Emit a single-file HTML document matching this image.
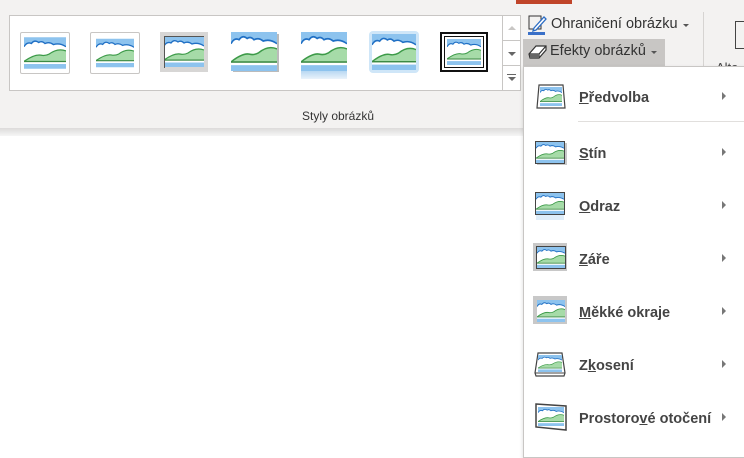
<!DOCTYPE html>
<html><head><meta charset="utf-8"><style>
body{margin:0;width:744px;height:441px;position:relative;overflow:hidden;background:#fff;font-family:"Liberation Sans","DejaVu Sans",sans-serif;}
.rib{position:absolute;left:0;top:0;width:744px;height:128px;background:#f3f2f1;}
.shadow{position:absolute;left:0;top:128px;width:744px;height:8px;background:linear-gradient(#dcdbda,#f6f6f6);}
.gal{position:absolute;left:9px;top:15px;width:492px;height:74px;background:#fff;border:1px solid #c8c6c4;}
.sb{position:absolute;left:502px;width:17px;background:#fff;border:1px solid #c8c6c4;}
.t{position:absolute;}
.mi{position:absolute;left:534px;height:30px;width:200px;}
.mi .lab{position:absolute;left:45px;top:8px;font-size:14.5px;font-weight:bold;color:#444;}
.mi .ar{position:absolute;left:188px;top:10px;width:0;height:0;border-left:4px solid #777;border-top:4px solid transparent;border-bottom:4px solid transparent;}
u{text-decoration:underline;}
</style></head><body>
<svg width="0" height="0" style="position:absolute"><defs>
<symbol id="p" viewBox="0 0 40 30">
<rect x="0" y="0" width="40" height="30" fill="#fff"/>
<rect x="0" y="0" width="40" height="9" fill="#8dc3ee"/>
<path d="M0 9 Q3 4 7 6 Q10 2 14 5 Q17 3 20 6 Q24 4 28 7 Q34 5 40 9 L40 30 L0 30Z" fill="#fff"/>
<path d="M0 9 Q3 4 7 6 Q10 2 14 5 Q17 3 20 6 Q24 4 28 7 Q34 5 40 9" fill="none" stroke="#1f6fc4" stroke-width="1.3"/>
<path d="M0 23 Q10 16 16 17 Q20 18 24 16 Q32 10 40 13 L40 23Z" fill="#a6dba8"/>
<path d="M0 23 Q10 16 16 17 Q20 18 24 16 Q32 10 40 13" fill="none" stroke="#3c9a48" stroke-width="1.2"/>
<rect x="0" y="22.5" width="40" height="1.2" fill="#3c8a44"/>
<rect x="0" y="25.5" width="40" height="4.5" fill="#8dc3ee"/>
</symbol></defs></svg>
<div class="rib"></div>
<div class="shadow"></div>
<div style="position:absolute;left:516px;top:0;width:56px;height:4px;background:#c0452a"></div>
<div class="gal"></div>
<div class="sb" style="top:15px;height:24px;"><div style="position:absolute;left:5px;top:10px;border-bottom:4px solid #c8c6c4;border-left:4px solid transparent;border-right:4px solid transparent"></div></div>
<div class="sb" style="top:40px;height:24px;"><div style="position:absolute;left:5px;top:11px;border-top:4px solid #666;border-left:4px solid transparent;border-right:4px solid transparent"></div></div>
<div class="sb" style="top:65px;height:24px;"><div style="position:absolute;left:4px;top:8px;width:9px;height:1px;background:#666"></div><div style="position:absolute;left:5px;top:11px;border-top:4px solid #666;border-left:4px solid transparent;border-right:4px solid transparent"></div></div>
<div class="t" style="left:20px;top:32px;width:48px;height:40px;border:1px solid #c8c6c4;background:#fff;border-radius:2px"><svg style="position:absolute;left:3px;top:3px" width="42" height="34"><use href="#p"/></svg></div>
<div class="t" style="left:90px;top:32px;width:48px;height:40px;border:1px solid #c8c6c4;background:#fff;border-radius:2px"><svg style="position:absolute;left:5px;top:4px" width="38" height="32"><use href="#p"/></svg></div>
<div class="t" style="left:160px;top:32px;width:48px;height:40px;background:#d7d6d5;"><svg style="position:absolute;left:4px;top:4px" width="40" height="32"><use href="#p"/></svg><div style="position:absolute;left:4px;top:4px;width:39px;height:31px;border-left:1px solid #555;border-top:1px solid #555"></div></div>
<div class="t" style="left:233px;top:34px;width:46px;height:38px;background:#bbb"></div>
<svg class="t" style="left:231px;top:32px" width="46" height="39" viewBox="0 0 40 30" preserveAspectRatio="none"><use href="#p"/></svg>
<svg class="t" style="left:301px;top:32px" width="46" height="39" viewBox="0 0 40 30" preserveAspectRatio="none"><use href="#p"/></svg>
<div class="t" style="left:301px;top:71px;width:46px;height:8px;background:linear-gradient(#b8d8f2,#eaf3fb)"></div>
<div class="t" style="left:369px;top:31px;width:50px;height:42px;background:#cfe6f8;border-radius:4px"></div>
<svg class="t" style="left:372px;top:34px" width="44" height="36" viewBox="0 0 40 30" preserveAspectRatio="none"><use href="#p"/></svg>
<div class="t" style="left:440px;top:32px;width:48px;height:40px;background:#fff;border:2px solid #111;box-sizing:border-box"><div style="position:absolute;left:2px;top:2px;right:2px;bottom:2px;border:1px solid #111"></div><svg style="position:absolute;left:5px;top:5px" width="34" height="26" viewBox="0 0 40 30" preserveAspectRatio="none"><use href="#p"/></svg></div>
<div class="t" style="left:302px;top:109px;font-size:12px;color:#333">Styly obrázků</div>
<svg class="t" style="left:526px;top:14px" width="22" height="22"><rect x="3" y="2" width="12" height="13" fill="none" stroke="#333" stroke-width="1"/><path d="M8 14 L18 3 L20 5 L10 16 L7 17Z" fill="#fff" stroke="#2b6cc4" stroke-width="1.3"/><rect x="2" y="18" width="17" height="3" fill="#3a70c8"/></svg>
<div class="t" style="left:551px;top:16px;font-size:14.5px;color:#333">Ohraničení obrázku</div>
<div class="t" style="left:683px;top:24px;border-top:3px solid #555;border-left:3px solid transparent;border-right:3px solid transparent"></div>
<div class="t" style="left:523px;top:39px;width:142px;height:27px;background:#c8c6c4"></div>
<svg class="t" style="left:527px;top:43px" width="22" height="18"><path d="M2 11 L9 3 L19 3 L19 7 L12 15 L3 15Z" fill="#fff" stroke="#333" stroke-width="1.2"/><path d="M2 11 L12 11 L19 3 M12 11 L12 15" fill="none" stroke="#333" stroke-width="1.2"/><path d="M3 11 L12 11 L12 15 L3 15Z" fill="#666"/></svg>
<div class="t" style="left:550px;top:43px;font-size:14.5px;color:#333">Efekty obrázků</div>
<div class="t" style="left:651px;top:51px;border-top:3px solid #555;border-left:3px solid transparent;border-right:3px solid transparent"></div>
<div class="t" style="left:703px;top:12px;width:1px;height:100px;background:#d6d4d2"></div>
<div class="t" style="left:735px;top:21px;width:12px;height:26px;border:1px solid #444"></div>
<div class="t" style="left:716px;top:60px;font-size:13px;color:#444">Alte</div>
<div class="t" style="left:523px;top:66px;width:221px;height:390px;background:#fff;border:1px solid #c8c6c4;box-shadow:0 2px 4px rgba(0,0,0,.15)"></div>
<div class="t" style="left:578px;top:121px;width:166px;height:1px;background:#e1dfdd"></div>

<div class="mi" style="top:82px"><svg style="position:absolute;left:2px;top:2px" width="30" height="26"><path d="M3 1 H27 L29 24 H1Z" fill="#fff" stroke="#444" stroke-width="1.2"/><svg x="4" y="3" width="22" height="19" viewBox="0 0 40 30" preserveAspectRatio="none"><use href="#p"/></svg></svg><div class="lab"><u>P</u>ředvolba</div><div class="ar"></div></div>
<div class="mi" style="top:138px"><div style="position:absolute;left:3px;top:5px;width:30px;height:22px;background:#c8c8c8"></div><svg style="position:absolute;left:1px;top:3px;border:1px solid #444" width="28" height="21" viewBox="0 0 40 30" preserveAspectRatio="none"><use href="#p"/></svg><div class="lab"><u>S</u>tín</div><div class="ar"></div></div>
<div class="mi" style="top:191px"><svg style="position:absolute;left:1px;top:1px;border:1px solid #444" width="28" height="21" viewBox="0 0 40 30" preserveAspectRatio="none"><use href="#p"/></svg><div style="position:absolute;left:2px;top:24px;width:28px;height:5px;background:#e0eefa"></div><div class="lab"><u>O</u>draz</div><div class="ar"></div></div>
<div class="mi" style="top:244px"><div style="position:absolute;left:-1px;top:-1px;width:34px;height:28px;background:#c8c8c8"></div><svg style="position:absolute;left:2px;top:2px;border:1px solid #444" width="28" height="21" viewBox="0 0 40 30" preserveAspectRatio="none"><use href="#p"/></svg><div class="lab"><u>Z</u>áře</div><div class="ar"></div></div>
<div class="mi" style="top:297px"><div style="position:absolute;left:-1px;top:-1px;width:34px;height:28px;background:#c8c8c8"></div><svg style="position:absolute;left:3px;top:3px" width="28" height="22" viewBox="0 0 40 30" preserveAspectRatio="none"><use href="#p"/></svg><div class="lab"><u>M</u>ěkké okraje</div><div class="ar"></div></div>
<div class="mi" style="top:350px"><svg style="position:absolute;left:0;top:2px" width="32" height="26"><path d="M4 1 H28 L31 21 L30 24 H2 L1 21Z" fill="#fff" stroke="#444" stroke-width="1.2"/><path d="M1 21 H31" stroke="#444"/><svg x="4" y="3" width="24" height="17" viewBox="0 0 40 30" preserveAspectRatio="none"><use href="#p"/></svg></svg><div class="lab">Z<u>k</u>osení</div><div class="ar"></div></div>
<div class="mi" style="top:403px"><svg style="position:absolute;left:0;top:0" width="34" height="30"><path d="M2 1 L32 3 L32 27 L2 24Z" fill="#fff" stroke="#444" stroke-width="1.5"/><svg x="4" y="4" width="26" height="19" viewBox="0 0 40 30" preserveAspectRatio="none"><use href="#p"/></svg></svg><div class="lab">Prostoro<u>v</u>é otočení</div><div class="ar"></div></div>
</body></html>
